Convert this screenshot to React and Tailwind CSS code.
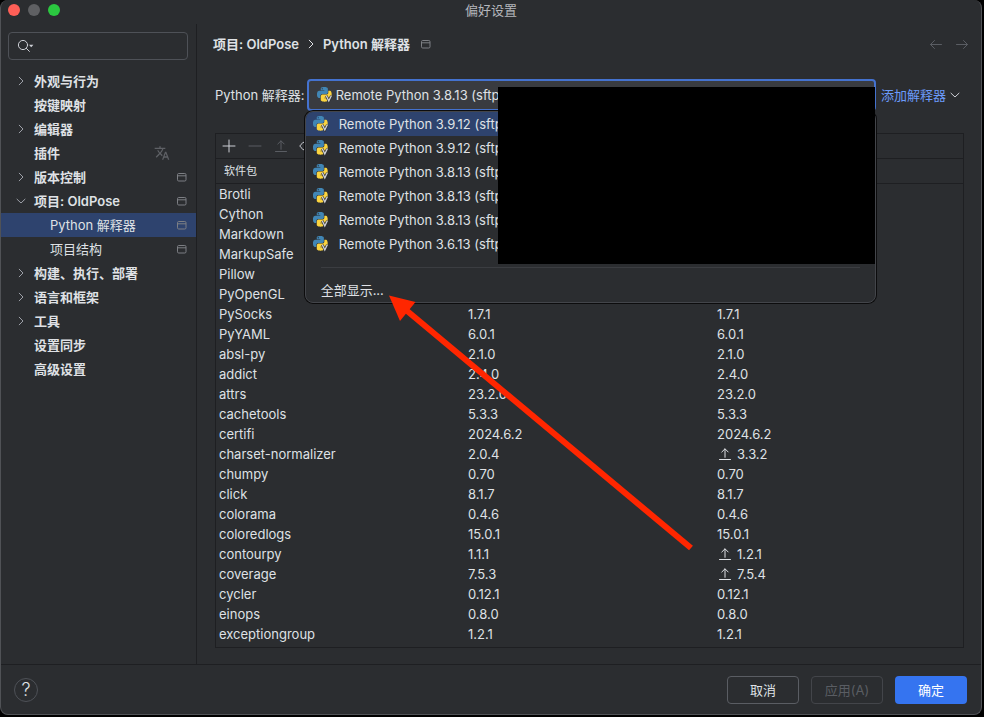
import React from "react";

const NAV = [
  { label: "外观与行为", arrow: "right" },
  { label: "按键映射" },
  { label: "编辑器", arrow: "right" },
  { label: "插件", translate: true },
  { label: "版本控制", arrow: "right", badge: true },
  { label: "项目: OldPose", arrow: "down", badge: true },
  { label: "Python 解释器", child: true, badge: true, selected: true },
  { label: "项目结构", child: true, badge: true },
  { label: "构建、执行、部署", arrow: "right" },
  { label: "语言和框架", arrow: "right" },
  { label: "工具", arrow: "right" },
  { label: "设置同步" },
  { label: "高级设置" },
];

const PACKAGES = [
  ["Brotli", "", ""],
  ["Cython", "", ""],
  ["Markdown", "", ""],
  ["MarkupSafe", "", ""],
  ["Pillow", "", ""],
  ["PyOpenGL", "", ""],
  ["PySocks", "1.7.1", "1.7.1"],
  ["PyYAML", "6.0.1", "6.0.1"],
  ["absl-py", "2.1.0", "2.1.0"],
  ["addict", "2.4.0", "2.4.0"],
  ["attrs", "23.2.0", "23.2.0"],
  ["cachetools", "5.3.3", "5.3.3"],
  ["certifi", "2024.6.2", "2024.6.2"],
  ["charset-normalizer", "2.0.4", "3.3.2", true],
  ["chumpy", "0.70", "0.70"],
  ["click", "8.1.7", "8.1.7"],
  ["colorama", "0.4.6", "0.4.6"],
  ["coloredlogs", "15.0.1", "15.0.1"],
  ["contourpy", "1.1.1", "1.2.1", true],
  ["coverage", "7.5.3", "7.5.4", true],
  ["cycler", "0.12.1", "0.12.1"],
  ["einops", "0.8.0", "0.8.0"],
  ["exceptiongroup", "1.2.1", "1.2.1"],
];

const INTERPRETERS = ["3.9.12", "3.9.12", "3.8.13", "3.8.13", "3.8.13", "3.6.13"];

function Chevron({ dir, className = "" }) {
  return (
    <svg viewBox="0 0 16 16" className={`size-4 shrink-0 ${className}`} fill="none" stroke="currentColor" strokeLinecap="round" strokeLinejoin="round">
      <path d={dir === "down" ? "M4 6.2 8 10l4-3.8" : "M6.2 4.2 10 8l-3.8 3.8"} />
    </svg>
  );
}

function ProjectBadge({ className = "" }) {
  return (
    <svg viewBox="0 0 10 10" className={`size-[10px] shrink-0 ${className}`} fill="none" stroke="#7d7f84">
      <rect x="0.5" y="1.5" width="8.5" height="7.5" rx="1.2" />
      <path d="M1 3.8h8" />
    </svg>
  );
}

function TranslateIcon() {
  return (
    <svg viewBox="0 0 24 24" className="size-4 shrink-0" fill="#5e6065">
      <path d="m12.87 15.07-2.54-2.51.03-.03A17.52 17.52 0 0 0 14.07 6H17V4h-7V2H8v2H1v1.99h11.17C11.5 7.92 10.44 9.75 9 11.35 8.07 10.32 7.3 9.19 6.69 8h-2c.73 1.63 1.73 3.17 2.98 4.56l-5.09 5.02L4 19l5-5 3.11 3.11.76-2.04zM18.5 10h-2L12 22h2l1.12-3h4.75L21 22h2l-4.5-12zm-2.62 7 1.62-4.33L19.12 17h-3.24z" />
    </svg>
  );
}

function UploadIcon({ className = "" }) {
  return (
    <svg viewBox="0 0 16 16" className={`size-4 shrink-0 ${className}`} fill="none" stroke="currentColor" strokeLinecap="round" strokeLinejoin="round">
      <path d="M2.5 13.5h11M8 11.3V3M4.8 6 8 2.8 11.2 6" />
    </svg>
  );
}

function PythonIcon() {
  return (
    <svg viewBox="0 0 16 16" className="size-4 shrink-0">
      <g transform="scale(.61)">
        <path
          fill="#4186b5"
          d="M14.25.18l.9.2.73.26.59.3.45.32.34.34.25.34.16.33.1.3.04.26.02.2-.01.13V8.5l-.05.63-.13.55-.21.46-.26.38-.3.31-.33.25-.35.19-.35.14-.33.1-.3.07-.26.04-.21.02H8.77l-.69.05-.59.14-.5.22-.41.27-.33.32-.27.35-.2.36-.15.37-.1.35-.07.32-.04.27-.02.21v3.06H3.17l-.21-.03-.28-.07-.32-.12-.35-.18-.36-.26-.36-.36-.35-.46-.32-.59-.28-.73-.21-.88-.14-1.05-.05-1.23.06-1.22.16-1.04.24-.87.32-.71.36-.57.4-.44.42-.33.42-.24.4-.16.36-.1.32-.05.24-.01h.16l.06.01h8.16v-.83H6.18l-.01-2.75-.02-.37.05-.34.11-.31.17-.28.25-.26.31-.23.38-.2.44-.18.51-.15.58-.12.64-.1.71-.06.77-.04.84-.02 1.27.05zm-6.3 1.98l-.23.33-.08.41.08.41.23.34.33.22.41.09.41-.09.33-.22.23-.34.08-.41-.08-.41-.23-.33-.33-.22-.41-.09-.41.09z"
        />
        <path
          fill="#fbd43f"
          d="M21.04 6.11l.28.06.32.12.35.18.36.27.36.35.35.47.32.59.28.73.21.88.14 1.04.05 1.23-.06 1.23-.16 1.04-.24.86-.32.71-.36.57-.4.45-.42.33-.42.24-.4.16-.36.09-.32.05-.24.02-.16-.01h-8.22v.82h5.84l.01 2.76.02.36-.05.34-.11.31-.17.29-.25.25-.31.24-.38.2-.44.17-.51.15-.58.13-.64.09-.71.07-.77.04-.84.01-1.27-.04-1.07-.14-.9-.2-.73-.25-.59-.3-.45-.33-.34-.34-.25-.34-.16-.33-.1-.3-.04-.25-.02-.2.01-.13v-5.34l.05-.64.13-.54.21-.46.26-.38.3-.32.33-.24.35-.2.35-.14.33-.1.3-.06.26-.04.21-.02.13-.01h5.84l.69-.05.59-.14.5-.21.41-.28.33-.32.27-.35.2-.36.15-.36.1-.35.07-.32.04-.28.02-.21V6.07h2.09l.14.01z"
        />
      </g>
      <path d="M9.3 8.8 11.8 14l2.5-5.2" fill="none" stroke="#2b2d30" strokeWidth="2.6" />
      <path d="M9.3 8.8 11.8 14l2.5-5.2" fill="none" stroke="#ced0d6" strokeWidth="1.4" />
    </svg>
  );
}

function TitleBar() {
  return (
    <header className="grid h-6 grid-cols-3 items-start">
      <div className="flex gap-2 pt-1 pl-[7px]">
        <button aria-label="关闭" className="size-3 rounded-full bg-[#fe5f57]" />
        <button aria-label="最小化" className="size-3 rounded-full bg-[#5f6063]" />
        <button aria-label="缩放" className="size-3 rounded-full bg-[#2bc840]" />
      </div>
      <h1 className="text-center leading-5 text-[#b4b6bb]">偏好设置</h1>
    </header>
  );
}

function Sidebar() {
  return (
    <aside className="w-[196px] shrink-0 border-r border-[#1e1f22] pt-2">
      <label className="mr-2 ml-[7px] flex h-7 items-center rounded border border-[#4e5157] pl-2">
        <svg viewBox="0 0 18 16" className="h-4 w-[18px] shrink-0" fill="none" stroke="#ced0d6" strokeLinecap="round">
          <circle cx="6" cy="7" r="4.6" />
          <path d="m9.4 10.4 3 3" />
          <path d="M12 6.8h4.4l-2.2 2.4z" fill="#ced0d6" stroke="none" />
        </svg>
        <input aria-label="搜索设置" className="min-w-0 flex-1 bg-transparent outline-none" />
      </label>
      <nav className="pt-[9px]">
        {NAV.map((item) => (
          <a
            key={item.label}
            href="#"
            className={`flex h-6 items-center pr-[9px] pl-3 ${item.child ? "" : "font-semibold"} ${item.selected ? "bg-[#2e436e]" : ""}`}
          >
            {item.child ? (
              <span className="w-[37px]" />
            ) : (
              <span className="w-[21px] text-[#9da0a8]">{item.arrow && <Chevron dir={item.arrow} />}</span>
            )}
            <span className="flex-1 whitespace-nowrap">{item.label}</span>
            {item.translate && <span className="mr-[17px]"><TranslateIcon /></span>}
            {item.badge && <ProjectBadge />}
          </a>
        ))}
      </nav>
    </aside>
  );
}

function InterpreterPicker() {
  return (
    <div className="relative ml-[2px] flex-1">
      <div className="relative flex h-8 items-center">
        <select
          id="interpreter"
          className="h-8 w-full appearance-none rounded border-2 border-[#4472cf] bg-[#393b40] pl-[27px] outline-none"
        >
          <option>Remote Python 3.8.13 (sftp:/</option>
        </select>
        <span className="pointer-events-none absolute left-[10px]">
          <PythonIcon />
        </span>
      </div>
      <div className="absolute top-8 right-0 -left-[2px] z-10 overflow-hidden rounded-lg border border-[#43454a] bg-[#2b2d30] shadow-[0_0_0_1px_#0c0c0d]">
        <ul role="listbox" aria-label="Python 解释器">
          {INTERPRETERS.map((version, i) => (
            <li
              key={i}
              role="option"
              aria-selected={i === 0}
              className={`flex h-6 items-center gap-[10px] pl-[7px] ${i === 0 ? "bg-[#2e436e]" : ""}`}
            >
              <PythonIcon />
              <span className="whitespace-nowrap">Remote Python {version} (sftp:</span>
            </li>
          ))}
        </ul>
        <hr className="mx-[15px] mt-[11px] border-[#3b3d41]" />
        <button className="mt-[10px] block h-6 w-full pl-[15px] text-left">全部显示...</button>
      </div>
      <div className="absolute top-2 right-px left-[191px] z-20 h-[177px] bg-black" />
    </div>
  );
}

function PackageTable() {
  return (
    <section className="mt-[22px] mr-[17px] ml-[18px] border border-[#1e1f22] pb-[3px]">
      <div className="flex h-6 items-center gap-[10px] pl-[5px]">
        <button aria-label="安装" className="text-[#ced0d6]">
          <svg viewBox="0 0 16 16" className="size-4" fill="none" stroke="currentColor" strokeLinecap="round">
            <path d="M8 2v12M2 8h12" />
          </svg>
        </button>
        <button aria-label="卸载" className="text-[#5a5d63]">
          <svg viewBox="0 0 16 16" className="size-4" fill="none" stroke="currentColor" strokeLinecap="round">
            <path d="M2 8h12" />
          </svg>
        </button>
        <button aria-label="升级" className="text-[#5a5d63]">
          <UploadIcon />
        </button>
        <button aria-label="显示早期版本" className="text-[#ced0d6]">
          <svg viewBox="0 0 16 16" className="size-4" fill="none" stroke="currentColor" strokeLinecap="round" strokeLinejoin="round">
            <path d="M8 3.2C4.6 3.2 2.2 6 .8 8c1.4 2 3.8 4.8 7.2 4.8s5.8-2.8 7.2-4.8C13.8 6 11.4 3.2 8 3.2z" />
            <circle cx="8" cy="8" r="2.2" />
          </svg>
        </button>
      </div>
      <table className="w-full table-fixed border-collapse text-left">
        <thead>
          <tr className="h-[25px] border-y border-[#1e1f22] text-[11px]">
            <th className="pl-2 font-normal">软件包</th>
            <th className="pl-2 font-normal" aria-label="版本" />
            <th className="pl-2 font-normal" aria-label="最新版本" />
          </tr>
        </thead>
        <tbody>
          {PACKAGES.map(([name, version, latest, upgrade]) => (
            <tr key={name} className="h-5">
              <td className="pl-[3px]">{name}</td>
              <td className="pl-[3px]">{version}</td>
              <td className="pl-[3px]">
                <span className="flex items-center gap-1">
                  {upgrade && <UploadIcon />}
                  {latest}
                </span>
              </td>
            </tr>
          ))}
        </tbody>
      </table>
    </section>
  );
}

function NavArrow({ flip }) {
  return (
    <svg viewBox="0 0 16 16" className="size-4" fill="none" stroke="#5a5d63" strokeLinecap="round" strokeLinejoin="round">
      <path d={flip ? "M2.5 8.5h11M9.5 4.5l4 4-4 4" : "M13.5 8.5h-11M6.5 4.5l-4 4 4 4"} />
    </svg>
  );
}

export default function App() {
  return (
    <div className="relative flex min-h-screen flex-col bg-black pr-[2px] pb-[2px] font-['Inter','Noto_Sans_CJK_SC',sans-serif] text-[13px] leading-5 text-[#dfe1e5]">
      <div className="flex flex-1 flex-col overflow-hidden rounded-lg border border-t-0 border-[#505256] bg-[#2b2d30]">
        <TitleBar />
        <div className="flex flex-1">
          <Sidebar />
          <main className="min-w-0 flex-1">
            <div className="flex h-10 items-center pr-[11px] pl-4 font-semibold">
              <span>项目: OldPose</span>
              <Chevron dir="right" className="mx-1" />
              <span>Python 解释器</span>
              <ProjectBadge className="ml-[11px]" />
              <span className="ml-auto flex gap-[10px]">
                <button aria-label="后退"><NavArrow /></button>
                <button aria-label="前进"><NavArrow flip /></button>
              </span>
            </div>
            <div className="mt-[15px] flex items-center pr-[18px] pl-[18px]">
              <label htmlFor="interpreter" className="shrink-0">Python 解释器:</label>
              <InterpreterPicker />
              <a href="#" className="ml-[5px] flex shrink-0 items-center text-[#6b9bfa]">
                添加解释器
                <Chevron dir="down" className="ml-px text-[#ced0d6]" />
              </a>
            </div>
            <PackageTable />
          </main>
        </div>
        <footer className="flex h-[50px] items-center gap-3 border-t border-[#1e1f22] pr-[14px] pl-[13px]">
          <button aria-label="帮助" className="mr-auto size-6 rounded-full border border-[#4e5157] text-lg leading-5 font-light">?</button>
          <button className="h-7 w-[72px] rounded border border-[#5a5d63]">取消</button>
          <button disabled className="h-7 w-[72px] rounded border border-[#43454a] text-[#5a5d63]">应用(A)</button>
          <button className="h-7 w-[72px] rounded bg-[#3574f0] text-white">确定</button>
        </footer>
      </div>
      <svg viewBox="0 0 984 717" className="pointer-events-none absolute top-0 left-0 z-30 h-[717px] w-[984px]">
        <path d="M406 310 691 548" stroke="#ff2600" strokeWidth="6" fill="none" />
        <path d="M389 295.5 415.5 302 400 321z" fill="#ff2600" />
      </svg>
    </div>
  );
}
